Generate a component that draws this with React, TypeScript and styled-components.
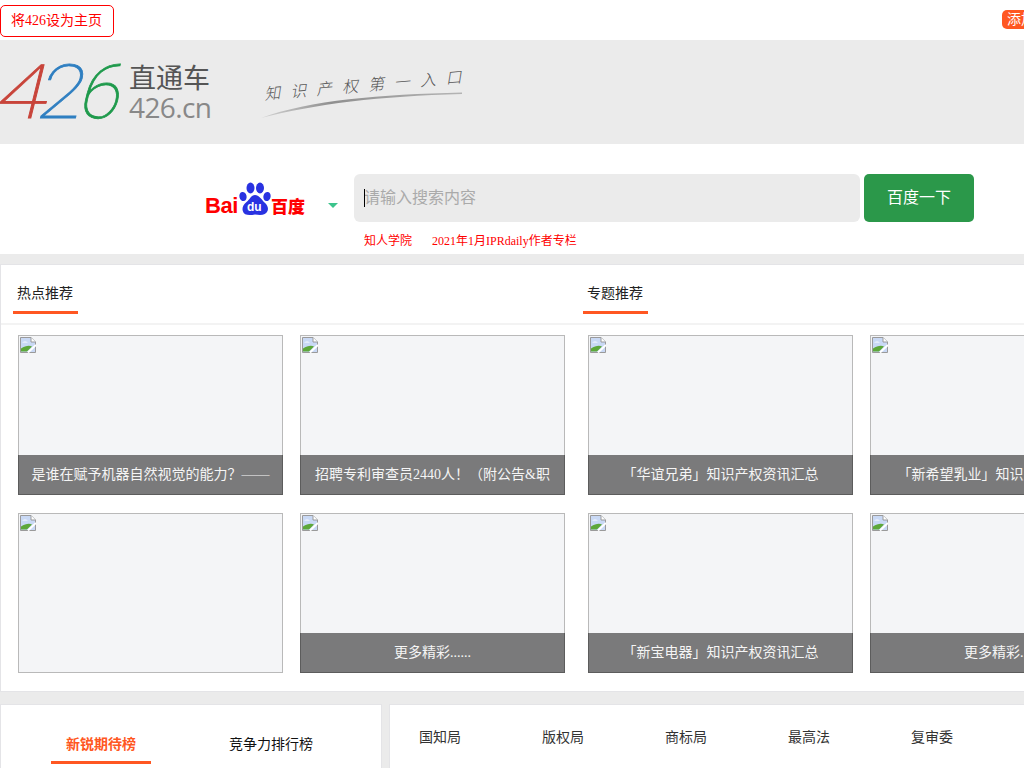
import React from 'react';
import styled, { createGlobalStyle } from 'styled-components';

const GlobalStyle = createGlobalStyle`
	html, body {
		margin: 0;
		padding: 0;
		overflow: hidden;
		background: #ebebeb;
	}
	body {
		font-family: "Liberation Serif", "Noto Sans CJK SC", serif;
	}
	* {
		box-sizing: border-box;
	}
`;

const Page = styled.div`
	width: 1200px;
	height: 768px;
	overflow: hidden;
`;

const TopBar = styled.div`
	height: 40px;
	width: 1024px;
	background: #fff;
	display: flex;
	justify-content: space-between;
	padding-top: 5px;
`;

const HomeButton = styled.a`
	width: 114px;
	height: 32px;
	border: 1px solid #f00;
	border-radius: 5px;
	color: #f00;
	font-size: 14px;
	line-height: 30px;
	padding-left: 10px;
`;

const AddBadge = styled.a`
	width: 60px;
	margin: 5px -38px 0 0;
	height: 19px;
	border-radius: 5px;
	background: #ff5722;
	color: #fff;
	font-size: 14px;
	line-height: 19px;
	padding-left: 5px;
	white-space: nowrap;
	overflow: hidden;
`;

const Header = styled.header`
	height: 104px;
	width: 1024px;
	background: #ebebeb;
	display: flex;
	align-items: flex-start;
`;

const Logo = styled.div`
	display: flex;
	width: 262px;
	padding-top: 22px;
`;

const Digits = styled.div`
	display: flex;
	width: 129px;
	height: 60px;
	margin-left: -5px;
	margin-right: 5px;
	font-family: Roboto, sans-serif;
	font-weight: 100;
	font-size: 75px;
	line-height: 60px;
	-webkit-text-stroke: 0.8px currentColor;
`;

const Digit = styled.span<{ $color: string; $w: number; $sx: number }>`
	color: ${({ $color }) => $color};
	width: ${({ $w }) => $w}px;
	transform: skewX(-14deg) scaleX(${({ $sx }) => $sx});
	transform-origin: left 75%;
`;

const LogoText = styled.div`
	display: flex;
	flex-direction: column;
`;

const LogoName = styled.div`
	font-family: "Noto Sans CJK SC", sans-serif;
	font-size: 27px;
	line-height: 30px;
	color: #555;
`;

const LogoDomain = styled.div`
	font-family: "Open Sans", sans-serif;
	font-size: 28px;
	line-height: 30px;
	letter-spacing: -0.6px;
	color: #888;
`;

const Tagline = styled.div`
	position: relative;
	width: 200px;
	height: 50px;
	margin-top: 28px;
`;

const TaglineText = styled.div`
	font-family: "Noto Sans CJK SC", sans-serif;
	font-weight: 300;
	font-size: 16px;
	letter-spacing: 10px;
	color: #555;
	white-space: nowrap;
	transform: rotate(-5deg) skewX(-14deg);
	transform-origin: left center;
	padding: 13px 0 0 5px;
`;

const Swoosh = styled.svg`
	position: absolute;
	left: -2px;
	top: 22px;
`;

const SearchSection = styled.section`
	height: 110px;
	width: 1024px;
	background: #fff;
	padding: 30px 0 0 205px;
`;

const SearchRow = styled.div`
	display: flex;
`;

const EngineSelect = styled.div`
	width: 149px;
	height: 48px;
	display: flex;
	align-items: flex-start;
`;

const BaiduLogo = styled.div`
	display: flex;
	width: 123px;
	padding-top: 8px;
`;

const BaiduBai = styled.span`
	font-family: "Liberation Sans", sans-serif;
	font-weight: 700;
	font-size: 22px;
	line-height: 24px;
	letter-spacing: -0.4px;
	margin-top: 12px;
	color: #f00;
	width: 33px;
`;

const Paw = styled.div`
	position: relative;
	width: 33px;
	height: 36px;
`;

const PawLabel = styled.span`
	position: absolute;
	left: 9px;
	top: 17px;
	font-family: "Liberation Sans", sans-serif;
	font-weight: 700;
	font-size: 12px;
	line-height: 16px;
	color: #fff;
`;

const BaiduName = styled.span`
	font-family: "Noto Sans CJK SC", sans-serif;
	font-weight: 900;
	font-size: 17px;
	line-height: 22px;
	margin-top: 13px;
	color: #f00;
`;

const Caret = styled.i`
	width: 0;
	height: 0;
	margin-top: 29px;
	border-style: solid;
	border-width: 5px 5px 0;
	border-color: #3cc48c transparent transparent;
`;

const SearchInput = styled.div`
	position: relative;
	width: 506px;
	height: 48px;
	border-radius: 6px;
	background: #ebebeb;
	color: #aaa;
	font-size: 16px;
	line-height: 48px;
	padding-left: 10px;

	&::before {
		content: '';
		position: absolute;
		left: 10px;
		top: 15px;
		width: 1px;
		height: 18px;
		background: #000;
	}
`;

const SearchButton = styled.button`
	width: 110px;
	height: 48px;
	margin-left: 4px;
	padding: 0 0 4px;
	border: none;
	border-radius: 5px;
	background: #2b984a;
	color: #fff;
	font-family: inherit;
	font-size: 16px;
`;

const HotLinks = styled.div`
	display: flex;
	gap: 20px;
	padding: 11px 0 0 159px;
	font-size: 12px;
	line-height: 16px;
	color: #f00;
`;

const Panel = styled.section`
	margin-top: 10px;
	height: 428px;
	width: 1200px;
	background: #fff;
	border: 1px solid #e4e4e7;
`;

const TabBar = styled.div`
	display: flex;
	height: 60px;
	border-bottom: 2px solid #f3f3f3;
	padding-left: 12px;
`;

const TabTitle = styled.div`
	width: 570px;
`;

const TabLabel = styled.span`
	display: inline-block;
	height: 49px;
	padding: 20px 5px 0 4px;
	border-bottom: 3px solid #ff5722;
	font-size: 14px;
	line-height: 17px;
	color: #222;
`;

const CardArea = styled.div`
	display: grid;
	grid-template-columns: repeat(4, 265px);
	grid-template-rows: repeat(2, 160px);
	column-gap: 17px;
	row-gap: 18px;
	padding: 10px 0 0 17px;
`;

const Card = styled.a<{ $shift?: boolean }>`
	position: relative;
	width: 265px;
	height: 160px;
	border: 1px solid #b9b9b9;
	background: #f4f5f7;
	margin-left: ${({ $shift }) => ($shift ? '6px' : '0')};
`;

const BrokenIcon = styled.svg`
	position: absolute;
	left: 1px;
	top: 1px;
`;

const Caption = styled.div`
	position: absolute;
	left: -1px;
	right: -1px;
	bottom: -1px;
	height: 40px;
	background: rgba(0, 0, 0, 0.5);
	color: #f5f5f5;
	font-size: 14px;
	line-height: 40px;
	text-align: center;
	white-space: nowrap;
	overflow: hidden;
`;

const BottomRow = styled.div`
	display: flex;
	gap: 7px;
	margin-top: 12px;
`;

const RankPanel = styled.div`
	width: 382px;
	height: 80px;
	background: #fff;
	border: 1px solid #e4e4e7;
	display: flex;
	padding: 24px 0 0 50px;
`;

const RankTab = styled.div<{ $active?: boolean }>`
	width: ${({ $active }) => ($active ? '100px' : 'auto')};
	height: 35px;
	margin-right: ${({ $active }) => ($active ? '78px' : '0')};
	border-bottom: ${({ $active }) => ($active ? '3px solid #ff5722' : 'none')};
	color: ${({ $active }) => ($active ? '#ff5722' : '#111')};
	font-weight: ${({ $active }) => ($active ? 700 : 400)};
	font-size: 14px;
	line-height: 32px;
	text-align: center;
`;

const NewsPanel = styled.div`
	width: 811px;
	height: 80px;
	background: #fff;
	border: 1px solid #e4e4e7;
	display: flex;
	padding: 23px 0 0 29px;
`;

const NewsTab = styled.div`
	width: 123px;
	font-size: 14px;
	line-height: 20px;
	color: #333;
`;

const BrokenImage = () => (
	<BrokenIcon width="16" height="16" viewBox="0 0 16 16">
		<path d="M.5.500H11L15.500 5V15.500H.5Z" fill="#c9d9f5" stroke="#9a9a9a" />
		<path d="M11 .5V5H15.500" fill="#fff" stroke="#9a9a9a" />
		<path d="M2 5.500c2-1.500 4-1.500 6 0z" fill="#fff" />
		<path d="M1 14.500v-3C5 9 9 8 12 9.500L7 14.500Z" fill="#5da83a" />
		<path d="M8 15.500 16 8" stroke="#fff" strokeWidth="2" />
	</BrokenIcon>
);

const cards = [
	'是谁在赋予机器自然视觉的能力？——',
	'招聘专利审查员2440人！（附公告&职',
	'「华谊兄弟」知识产权资讯汇总',
	'「新希望乳业」知识产权资讯汇总',
	'',
	'更多精彩......',
	'「新宝电器」知识产权资讯汇总',
	'更多精彩......',
];

const newsTabs = ['国知局', '版权局', '商标局', '最高法', '复审委'];

const App = () => (
	<Page>
		<GlobalStyle />
		<TopBar>
			<HomeButton>将426设为主页</HomeButton>
			<AddBadge>添加收藏</AddBadge>
		</TopBar>
		<Header>
			<Logo>
				<Digits>
					<Digit $color="#c8443a" $w={42} $sx={1.25}>4</Digit>
					<Digit $color="#2f7fc1" $w={42} $sx={1.1}>2</Digit>
					<Digit $color="#1f9a4c" $w={40} $sx={1}>6</Digit>
				</Digits>
				<LogoText>
					<LogoName>直通车</LogoName>
					<LogoDomain>426.cn</LogoDomain>
				</LogoText>
			</Logo>
			<Tagline>
				<TaglineText>知识产权第一入口</TaglineText>
				<Swoosh width="204" height="30" viewBox="0 0 204 30">
					<defs>
						<linearGradient id="swoosh" x1="0" x2="1" y1="0" y2="0">
							<stop offset="0" stopColor="#d4d4d4" />
							<stop offset="0.35" stopColor="#8f8f8f" />
							<stop offset="1" stopColor="#b4b4b4" />
						</linearGradient>
					</defs>
					<path d="M1 28C50 10 120 4.500 202 2.500V4C120 6 55 14 1 28Z" fill="url(#swoosh)" />
				</Swoosh>
			</Tagline>
		</Header>
		<SearchSection>
			<SearchRow>
				<EngineSelect>
					<BaiduLogo>
						<BaiduBai>Bai</BaiduBai>
						<Paw>
							<svg width="33" height="36" viewBox="0 0 33 36">
								<g fill="#2932e1">
									<ellipse cx="5" cy="14.500" rx="3.600" ry="4.600" transform="rotate(-12 5 14.500)" />
									<ellipse cx="12.500" cy="6" rx="4" ry="5.400" />
									<ellipse cx="22" cy="6" rx="4" ry="5.400" />
									<ellipse cx="29" cy="14.500" rx="3.600" ry="4.600" transform="rotate(12 29 14.500)" />
									<path d="M17 13c4 0 6 4 9.500 7.500 3.500 3 4 6 3 8.500-1.500 4-6 4.500-12.500 3.500C11 33.500 6 33.500 4.800 29c-.8-3 0-6 3.700-9 3.500-2.500 4.500-7 8.500-7Z" />
								</g>
							</svg>
							<PawLabel>du</PawLabel>
						</Paw>
						<BaiduName>百度</BaiduName>
					</BaiduLogo>
					<Caret />
				</EngineSelect>
				<SearchInput>请输入搜索内容</SearchInput>
				<SearchButton>百度一下</SearchButton>
			</SearchRow>
			<HotLinks>
				<span>知人学院</span>
				<span>2021年1月IPRdaily作者专栏</span>
			</HotLinks>
		</SearchSection>
		<Panel>
			<TabBar>
				<TabTitle><TabLabel>热点推荐</TabLabel></TabTitle>
				<TabTitle><TabLabel>专题推荐</TabLabel></TabTitle>
			</TabBar>
			<CardArea>
				{cards.map((text, i) => (
					<Card key={i} $shift={i % 4 >= 2}>
						<BrokenImage />
						{text && <Caption>{text}</Caption>}
					</Card>
				))}
			</CardArea>
		</Panel>
		<BottomRow>
			<RankPanel>
				<RankTab $active>新锐期待榜</RankTab>
				<RankTab>竞争力排行榜</RankTab>
			</RankPanel>
			<NewsPanel>
				{newsTabs.map((tab) => (
					<NewsTab key={tab}>{tab}</NewsTab>
				))}
			</NewsPanel>
		</BottomRow>
	</Page>
);

export default App;
